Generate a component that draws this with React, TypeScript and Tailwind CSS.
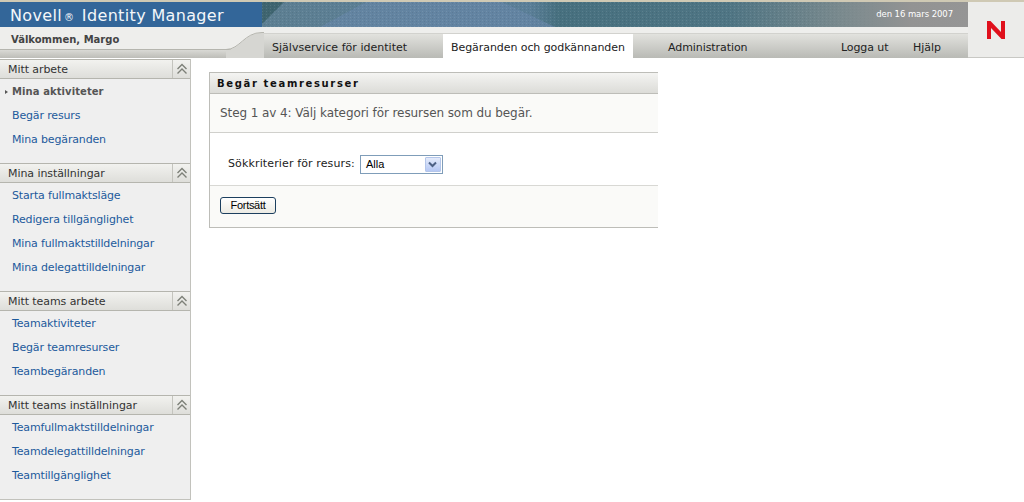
import React from 'react';

const font = { fontFamily: '"DejaVu Sans", Verdana, sans-serif' };

const menus = [
  {
    title: 'Mitt arbete',
    items: ['Mina aktiviteter', 'Begär resurs', 'Mina begäranden'],
    current: 'Mina aktiviteter',
  },
  {
    title: 'Mina inställningar',
    items: ['Starta fullmaktsläge', 'Redigera tillgänglighet', 'Mina fullmaktstilldelningar', 'Mina delegattilldelningar'],
  },
  {
    title: 'Mitt teams arbete',
    items: ['Teamaktiviteter', 'Begär teamresurser', 'Teambegäranden'],
  },
  {
    title: 'Mitt teams inställningar',
    items: ['Teamfullmaktstilldelningar', 'Teamdelegattilldelningar', 'Teamtillgänglighet'],
  },
];

const Chevrons = () => (
  <svg width="12" height="12" viewBox="0 0 12 12" fill="none" stroke="#7d8078" strokeWidth="1.4">
    <path d="M1.5 6 L6 1.5 L10.5 6" />
    <path d="M1.5 10.5 L6 6 L10.5 10.5" />
  </svg>
);

// the textured photo strip behind the date
const BannerArt = () => (
  <svg className="absolute inset-0" width="706" height="25" viewBox="0 0 706 25">
    <defs>
      <linearGradient id="bannerBase" x1="0" x2="1" y1="0" y2="0">
        <stop offset="0" stopColor="#5d7f92" />
        <stop offset="0.38" stopColor="#5b7f98" />
        <stop offset="0.42" stopColor="#47707f" />
        <stop offset="0.66" stopColor="#4f7584" />
        <stop offset="0.82" stopColor="#7a8a8e" />
        <stop offset="0.92" stopColor="#939393" />
        <stop offset="1" stopColor="#959595" />
      </linearGradient>
      <pattern id="bannerDots" width="4" height="3" patternUnits="userSpaceOnUse">
        <rect x="0" y="0" width="1" height="1" fill="#ffffff" opacity="0.1" />
        <rect x="2" y="1" width="1" height="1" fill="#000000" opacity="0.07" />
      </pattern>
      <linearGradient id="bannerFade" x1="0" x2="1" y1="0" y2="0">
        <stop offset="0.75" stopColor="#ffffff" />
        <stop offset="0.88" stopColor="#000000" />
      </linearGradient>
      <mask id="bannerMask">
        <rect width="706" height="25" fill="url(#bannerFade)" />
      </mask>
    </defs>
    <rect width="706" height="25" fill="url(#bannerBase)" />
    <polygon points="0,0 22,0 0,22" fill="#3f6570" />
    <polygon points="58,25 104,0 240,0 293,25" fill="#6686a6" opacity="0.75" />
    <rect width="706" height="25" fill="url(#bannerDots)" mask="url(#bannerMask)" />
  </svg>
);

const Section: React.FC<{ title: string; items: string[]; current?: string }> = ({ title, items, current }) => (
  <div className="pb-3">
    <div className="flex h-5 border-y border-[#b5b5ae] bg-gradient-to-b from-[#f2f2ef] to-[#dededa]">
      <div className="flex-1 pl-2 text-[11px] leading-[19px] tracking-[-0.07px] text-[#333]">{title}</div>
      <div className="flex w-[18px] items-center justify-center border-l border-[#c4c4be]">
        <Chevrons />
      </div>
    </div>
    {items.map(item => (
      <div key={item} className="relative h-6 pl-3 text-[11px] leading-[25px] tracking-[-0.15px]">
        {item === current ? (
          <>
            <span className="absolute left-[5px] top-[11px] h-0 w-0 border-y-[2px] border-l-[3px] border-y-transparent border-l-[#555]" />
            <span className="text-[10px] font-bold tracking-[0.08px] text-[#555]">{item}</span>
          </>
        ) : (
          <span className="text-[#1d5a9c]">{item}</span>
        )}
      </div>
    ))}
  </div>
);

const Tab: React.FC<{ label: string; className: string }> = ({ label, className }) => (
  <div className={`h-full whitespace-nowrap text-[11px] leading-[27px] text-[#222] ${className}`}>{label}</div>
);

export default function App() {
  return (
    <div className="flex h-[502px] w-[1024px] flex-col overflow-hidden bg-white" style={font}>
      {/* Header */}
      <div className="h-[2px] bg-[#cfc9b4]" />
      <div className="flex h-[56px]">
        <div className="flex min-w-0 flex-1 flex-col">
          <div className="flex h-[25px]">
            <div className="w-[262px] whitespace-nowrap bg-[#336699] pl-[10px] text-[16px] leading-[27px] tracking-[0.35px] text-[#f4f7fa]">
              Novell<span className="mx-[2px] text-[10px]">®</span> Identity Manager
            </div>
            <div className="relative flex flex-1 items-center justify-end pr-[15px]">
              <BannerArt />
              <span className="relative text-[8.5px] tracking-[-0.07px] text-white">den 16 mars 2007</span>
            </div>
          </div>
          <div className="relative flex h-[31px] bg-[#eeeeec]">
            <div className="w-[262px]">
              <div className="h-[22px] pl-[11px] text-[10px] font-bold leading-[25px] text-[#444]">Välkommen, Margo</div>
              <div className="h-[9px] border-t border-[#b5b5ae] bg-gradient-to-b from-[#d9d9d5] to-[#bdbdb8]" />
            </div>
            <svg className="absolute left-[226px] top-0" width="38" height="31" viewBox="0 0 38 31">
              <path d="M0 23 C14 23 18 6 36 6 L38 6 L38 31 L0 31 Z" fill="#d6d6d2" />
              <path d="M0 22.5 C14 22.5 18 5.5 36 5.5 L38 5.5" fill="none" stroke="#b5b5ae" />
            </svg>
            <div className="mt-[6px] flex flex-1 border-t border-[#d2d2ce] bg-gradient-to-b from-[#e2e2de] to-[#b9bab5] pl-[10px]">
              <Tab label="Självservice för identitet" className="w-[171px] tracking-[0.03px]" />
              <Tab label="Begäranden och godkännanden" className="w-[190px] bg-white pl-2 tracking-[-0.07px]" />
              <Tab label="Administration" className="ml-[35px] w-[173px] tracking-[-0.07px]" />
              <Tab label="Logga ut" className="w-[72px] tracking-[-0.1px]" />
              <Tab label="Hjälp" className="" />
            </div>
          </div>
        </div>
        <div className="flex w-[56px] items-start justify-center border-b border-[#c8c8c4] bg-[#ececea] pt-[18px]">
          <svg width="18" height="19" viewBox="0 0 18 19">
            <path d="M0 19 V1 H3.5 L14 12 V1 H18 V19 H14.5 L4 8 V19 Z" fill="#e0101c" />
          </svg>
        </div>
      </div>

      {/* Body */}
      <div className="flex flex-1">
        <div className="mt-px h-[441px] w-[191px] border-r border-b border-[#c2c2bc] bg-[#efefef]">
          {menus.map(menu => (
            <Section key={menu.title} {...menu} />
          ))}
        </div>
        <div className="pl-[18px] pt-[14px]">
          <div className="w-[449px] border-y border-l border-[#bdbdb8] bg-[#fafaf8]">
            <div className="h-[21px] border-b border-[#bdbdb8] bg-gradient-to-b from-[#f4f4f2] to-[#dcdcd8] pl-[7px] text-[10px] font-bold leading-[22px] tracking-[1.65px] text-[#111]">
              Begär teamresurser
            </div>
            <div className="h-[39px] border-b border-[#d0d0cc] pl-[10px] text-[12px] leading-[38px] tracking-[-0.08px] text-[#555]">
              Steg 1 av 4: Välj kategori för resursen som du begär.
            </div>
            <div className="flex h-[53px] items-center border-b border-[#d8d8d4] bg-white pl-[18px] pt-[10px]">
              <span className="mr-[5px] text-[11px] tracking-[0.13px] text-[#222]">Sökkriterier för resurs:</span>
              <div className="flex h-[19px] w-[83px] items-center justify-between border border-[#7f9db9] bg-white pl-[5px] pr-px">
                <span className="text-[11px] text-black" style={{ fontFamily: '"Liberation Sans", sans-serif' }}>Alla</span>
                <div className="flex h-[15px] w-[16px] items-center justify-center rounded-[1px] border border-[#b4c6ea] bg-gradient-to-b from-[#e4ebfb] to-[#b6c8f4]">
                  <svg width="9" height="7" viewBox="0 0 9 7" fill="none" stroke="#4d6185" strokeWidth="2">
                    <path d="M1 1.5 L4.5 5 L8 1.5" />
                  </svg>
                </div>
              </div>
            </div>
            <div className="h-[41px] pl-[10px] pt-[11px]">
              <button className="flex h-[17px] w-[56px] items-center justify-center rounded-[3px] border border-[#1c3f5f] bg-gradient-to-b from-white to-[#ecebe4] text-[11px] tracking-[-0.3px] text-black" style={{ fontFamily: '"Liberation Sans", sans-serif' }}>
                Fortsätt
              </button>
            </div>
          </div>
        </div>
      </div>
    </div>
  );
}
